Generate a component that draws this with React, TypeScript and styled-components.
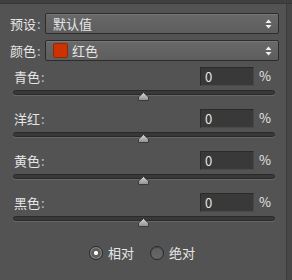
import React from 'react';
import styled, { createGlobalStyle } from 'styled-components';

const GlobalStyle = createGlobalStyle`
  html, body {
    margin: 0;
    padding: 0;
    background: #535353;
  }
  body {
    font-family: 'Noto Sans CJK SC', 'Noto Sans', sans-serif;
    font-size: 13px;
    color: #e6e6e6;
  }
`;

const Frame = styled.div`
  width: 292px;
  height: 280px;
  display: flex;
  flex-direction: column;
  overflow: hidden;
`;

const TopBand = styled.div`
  height: 3px;
  background: #404040;
  border-bottom: 1px solid #363636;
`;

const Body = styled.div`
  flex: 1;
  display: flex;
`;

const Panel = styled.div`
  flex: 1;
  display: flex;
  flex-direction: column;
  padding-top: 9px;
`;

const SideStrip = styled.div`
  width: 5px;
  background: #474747;
  border-left: 1px solid #3b3b3b;
`;

const SelectRow = styled.div`
  display: flex;
  align-items: center;
  height: 21px;
  margin-bottom: 6px;
`;

const SelectLabel = styled.div`
  width: 35px;
  padding-left: 10px;
  line-height: 21px;
  white-space: nowrap;
`;

const Colon = styled.span`
  color: #a9c6e6;
  margin-left: 1px;
`;

const Select = styled.div`
  box-sizing: border-box;
  width: 234px;
  height: 21px;
  display: flex;
  align-items: center;
  gap: 4px;
  padding: 0 6px 0 7px;
  background: linear-gradient(#696969, #5d5d5d);
  border: 1px solid #2c2c2c;
  border-radius: 2px;
  box-shadow: inset 0 1px 0 #777777;
`;

const SelectText = styled.span`
  flex: 1;
  line-height: 19px;
  white-space: nowrap;
`;

const Swatch = styled.span`
  width: 15px;
  height: 15px;
  box-sizing: border-box;
  background: #cc3300;
  border: 1px solid #8a2a0a;
  border-radius: 2px;
`;

const SliderBlock = styled.div`
  display: flex;
  flex-direction: column;
  padding: 0 11px 0 13px;
  margin-bottom: 14px;
`;

const SliderHead = styled.div`
  display: flex;
  align-items: center;
  height: 19px;
`;

const SliderLabel = styled.div`
  flex: 1;
  padding-left: 1px;
  white-space: nowrap;
`;

const NumberBox = styled.div`
  box-sizing: border-box;
  width: 54px;
  height: 19px;
  padding-left: 4px;
  line-height: 18px;
  background: #393939;
  border: 1px solid #2b2b2b;
  border-right-color: #474747;
  border-bottom-color: #4a4a4a;
`;

const Percent = styled.span`
  width: 21px;
  padding-left: 5px;
  box-sizing: border-box;
  margin-top: -3px;
`;

const Track = styled.div`
  position: relative;
  margin-top: 4px;
  height: 5px;
  box-sizing: border-box;
  background: #383838;
  border: 1px solid #2a2a2a;
  border-radius: 3px;
  box-shadow: 0 1px 0 #666666;
`;

const Thumb = styled.svg`
  position: absolute;
  left: 124px;
  top: 1px;
`;

const RadioRow = styled.div`
  display: flex;
  justify-content: center;
  align-items: center;
  gap: 16px;
  margin-top: 8px;
  padding-right: 2px;
`;

const RadioOption = styled.label`
  display: flex;
  align-items: center;
  gap: 5px;
  white-space: nowrap;
`;

const RadioDot = styled.span<{ $checked?: boolean }>`
  width: 14px;
  height: 14px;
  box-sizing: border-box;
  border-radius: 50%;
  border: 1px solid #2a2a2a;
  background: ${(p) =>
    p.$checked
      ? 'radial-gradient(circle, #ffffff 0 1.8px, #5a5a5a 2.4px, #6e6e6e 100%)'
      : 'linear-gradient(#5e5e5e, #686868)'};
  box-shadow: ${(p) =>
    p.$checked ? 'inset 0 0 0 1px #8a8a8a' : 'inset 0 1px 0 #4a4a4a'};
`;

const UpDown = () => (
  <svg width="7" height="10" viewBox="0 0 7 10">
    <path d="M3.5 0.5 L6.5 4 L0.5 4 Z" fill="#f0f0f0" />
    <path d="M3.5 9.5 L6.5 6 L0.5 6 Z" fill="#f0f0f0" />
  </svg>
);

const SliderThumb = () => (
  <Thumb width="11" height="9" viewBox="0 0 11 9">
    <defs>
      <linearGradient id="tg" x1="0" y1="0" x2="0" y2="1">
        <stop offset="0" stopColor="#d6d6d6" />
        <stop offset="1" stopColor="#8e8e8e" />
      </linearGradient>
    </defs>
    <path
      d="M5.5 0.5 L10.5 5 L10.5 8.5 L0.5 8.5 L0.5 5 Z"
      fill="url(#tg)"
      stroke="#3a3a3a"
      strokeWidth="1"
    />
  </Thumb>
);

const sliders = ['青色', '洋红', '黄色', '黑色'];

const App: React.FC = () => {
  return (
    <Frame>
      <GlobalStyle />
      <TopBand />
      <Body>
        <Panel>
          <SelectRow>
            <SelectLabel>
              预设<Colon>:</Colon>
            </SelectLabel>
            <Select>
              <SelectText>默认值</SelectText>
              <UpDown />
            </Select>
          </SelectRow>
          <SelectRow>
            <SelectLabel>
              颜色<Colon>:</Colon>
            </SelectLabel>
            <Select>
              <Swatch />
              <SelectText>红色</SelectText>
              <UpDown />
            </Select>
          </SelectRow>
          {sliders.map((name) => (
            <SliderBlock key={name}>
              <SliderHead>
                <SliderLabel>
                  {name}
                  <Colon>:</Colon>
                </SliderLabel>
                <NumberBox>0</NumberBox>
                <Percent>%</Percent>
              </SliderHead>
              <Track>
                <SliderThumb />
              </Track>
            </SliderBlock>
          ))}
          <RadioRow>
            <RadioOption>
              <RadioDot $checked />
              相对
            </RadioOption>
            <RadioOption>
              <RadioDot />
              绝对
            </RadioOption>
          </RadioRow>
        </Panel>
        <SideStrip />
      </Body>
    </Frame>
  );
};

export default App;
